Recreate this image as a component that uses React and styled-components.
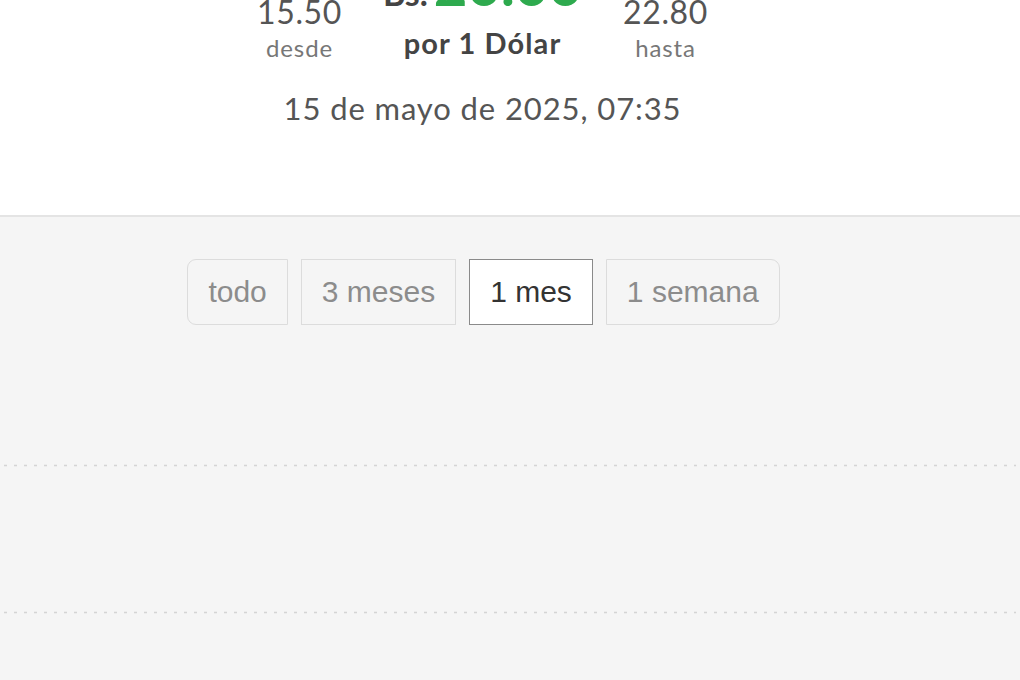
import React from "react";
import styled, { createGlobalStyle } from "styled-components";

const Global = createGlobalStyle`
  html, body { margin: 0; padding: 0; background: #f5f5f5; }
  body { font-family: Lato, "Open Sans", sans-serif; overflow: hidden; }
  * { box-sizing: border-box; }
`;

const Page = styled.div`
  width: 1020px;
  min-height: 680px;
  background: #f5f5f5;
`;

const Header = styled.header`
  height: 217px;
  background: #fff;
  border-bottom: 2px solid #e4e4e4;
  display: flex;
  flex-direction: column;
  justify-content: flex-end;
  align-items: center;
  padding: 0 55px 89px 0;
`;

const RateRow = styled.div`
  display: grid;
  grid-template-columns: 146px 220px 146px;
  align-items: end;
  margin-bottom: 29px;
`;

const Side = styled.div`
  display: flex;
  flex-direction: column;
  align-items: center;
`;

const SideValue = styled.div`
  font-size: 32px;
  line-height: 36px;
  letter-spacing: 0.6px;
  color: #555;
`;

const SideLabel = styled.div`
  font-size: 24px;
  line-height: 26px;
  letter-spacing: 0.9px;
  color: #777;
  margin-top: 5px;
`;

const Center = styled.div`
  display: flex;
  flex-direction: column;
  align-items: center;
  margin-bottom: 2px;
`;

const Big = styled.div`
  display: flex;
  align-items: baseline;
  gap: 6px;
  line-height: 64px;
  margin-bottom: 2px;
`;

const Currency = styled.span`
  font-size: 34px;
  font-weight: 700;
  color: #444;
`;

const Amount = styled.span`
  font-size: 58px;
  font-weight: 700;
  color: #2eaa4e;
`;

const Per = styled.div`
  font-size: 29px;
  line-height: 32px;
  letter-spacing: 1.1px;
  font-weight: 700;
  color: #444;
`;

const DateLine = styled.div`
  font-size: 31px;
  line-height: 36px;
  letter-spacing: 0.9px;
  color: #555;
`;

const RangeBar = styled.div`
  display: flex;
  justify-content: center;
  gap: 13px;
  padding: 42px 53px 0 0;
`;

const RangeButton = styled.button`
  height: 66px;
  padding: 0 20px;
  font-family: "Liberation Sans", Arial, sans-serif;
  font-size: 30px;
  background: ${(p) => (p.$active ? "#fff" : "#f5f5f5")};
  color: ${(p) => (p.$active ? "#333" : "#8c8c8c")};
  border: 1px solid ${(p) => (p.$active ? "#8a8a8a" : "#dcdcdc")};
  border-radius: ${(p) =>
    p.$pos === "first" ? "9px 0 0 9px" : p.$pos === "last" ? "0 9px 9px 0" : "0"};
  cursor: pointer;
`;

const Chart = styled.svg`
  display: block;
  width: 1020px;
  height: 355px;
`;

const ranges = [
  { label: "todo", pos: "first" },
  { label: "3 meses" },
  { label: "1 mes", active: true },
  { label: "1 semana", pos: "last" },
];

export default function App() {
  return (
    <Page>
      <Global />
      <Header>
        <RateRow>
          <Side>
            <SideValue>15.50</SideValue>
            <SideLabel>desde</SideLabel>
          </Side>
          <Center>
            <Big>
              <Currency>Bs.</Currency>
              <Amount>20.00</Amount>
            </Big>
            <Per>por 1 Dólar</Per>
          </Center>
          <Side>
            <SideValue>22.80</SideValue>
            <SideLabel>hasta</SideLabel>
          </Side>
        </RateRow>
        <DateLine>15 de mayo de 2025, 07:35</DateLine>
      </Header>
      <RangeBar>
        {ranges.map((r) => (
          <RangeButton key={r.label} $active={r.active} $pos={r.pos}>
            {r.label}
          </RangeButton>
        ))}
      </RangeBar>
      <Chart viewBox="0 0 1020 355">
        <line x1="4" y1="140.5" x2="1016" y2="140.5" stroke="#d4d4d4" strokeWidth="1.5" strokeDasharray="3 7" />
        <line x1="4" y1="287.5" x2="1016" y2="287.5" stroke="#d4d4d4" strokeWidth="1.5" strokeDasharray="3 7" />
      </Chart>
    </Page>
  );
}
